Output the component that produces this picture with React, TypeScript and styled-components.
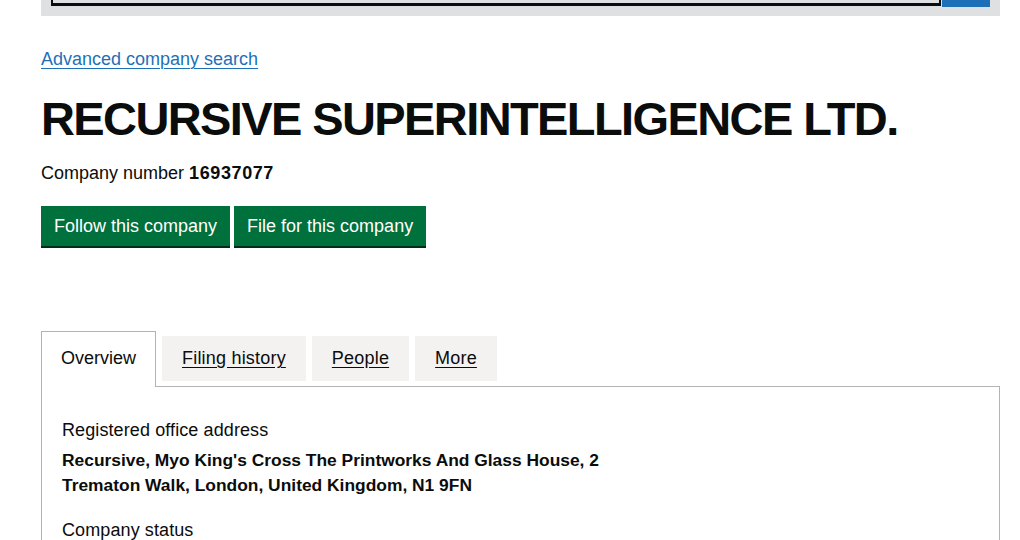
import styled, { createGlobalStyle } from "styled-components";

const GlobalStyle = createGlobalStyle`
    body {
        margin: 0;
        background: #ffffff;
        color: #0b0c0c;
        font-family: "Liberation Sans", Arial, sans-serif;
    }
`;

const Page = styled.div`
    width: 959px;
    margin-left: 41px;
`;

const SearchPanel = styled.div`
    display: flex;
    align-items: flex-start;
    height: 16px;
    padding: 0 10px;
    background-color: #dee0e2;
`;

const SearchInput = styled.div`
    flex: 1;
    height: 3px;
    border: 2px solid #0b0c0c;
    border-top: none;
    border-bottom-width: 3px;
`;

const SearchButton = styled.div`
    width: 48px;
    height: 7px;
    margin-left: 1px;
    background-color: #1d70b8;
`;

const BackLink = styled.a`
    display: inline-block;
    margin-top: 31px;
    font-size: 18px;
    line-height: 24px;
    color: #1d70b8;
    text-decoration: underline;
    text-underline-offset: 3px;
    text-decoration-thickness: 1px;
`;

const Heading = styled.h1`
    margin: 20px 0 0;
    font-size: 47px;
    line-height: 56px;
    font-weight: 700;
    letter-spacing: -1.6px;
`;

const CompanyNumber = styled.p`
    margin: 14px 0 0;
    font-size: 18px;
    line-height: 24px;

    strong {
        font-weight: 700;
        letter-spacing: 0.6px;
    }
`;

const ButtonRow = styled.div`
    display: flex;
    gap: 4px;
    margin-top: 21px;
`;

const GreenButton = styled.a`
    display: inline-block;
    padding: 8px 13px 8px;
    background-color: #00703c;
    box-shadow: 0 2px 0 #002d18;
    color: #ffffff;
    font-size: 18px;
    line-height: 24px;
    text-decoration: none;
`;

const Tabs = styled.div`
    margin-top: 85px;
`;

const TabList = styled.ul`
    display: flex;
    align-items: flex-start;
    gap: 6px;
    margin: 0;
    padding: 0;
    list-style: none;
`;

const Tab = styled.li<{ $selected?: boolean }>`
    position: relative;
    margin-top: ${(p) => (p.$selected ? "0" : "5px")};
    margin-bottom: ${(p) => (p.$selected ? "-1px" : "0")};
    padding: ${(p) => (p.$selected ? "14px 19px 16px" : "10px 20px")};
    background-color: ${(p) => (p.$selected ? "#ffffff" : "#f3f2f1")};
    border: ${(p) => (p.$selected ? "1px solid #b1b4b6" : "none")};
    border-bottom: none;
    font-size: 18px;
    line-height: 25px;

    a {
        color: #0b0c0c;
        text-decoration: ${(p) => (p.$selected ? "none" : "underline")};
        text-underline-offset: 3px;
        letter-spacing: ${(p) => (p.$selected ? "0" : "0.2px")};
    }
`;

const Panel = styled.div`
    border: 1px solid #b1b4b6;
    padding: 31px 20px 20px;
`;

const Details = styled.dl`
    margin: 0;
`;

const Label = styled.dt`
    font-size: 18px;
    line-height: 25px;
    letter-spacing: 0.1px;
`;

const Value = styled.dd`
    margin: 5px 0 20px;
    font-size: 17.4px;
    line-height: 25px;
    font-weight: 700;
    max-width: 560px;
`;

export default function App() {
    return (
        <>
            <GlobalStyle />
            <Page>
                <SearchPanel>
                    <SearchInput />
                    <SearchButton />
                </SearchPanel>
                <BackLink href="#">Advanced company search</BackLink>
                <Heading>RECURSIVE SUPERINTELLIGENCE LTD.</Heading>
                <CompanyNumber>
                    Company number <strong>16937077</strong>
                </CompanyNumber>
                <ButtonRow>
                    <GreenButton href="#">Follow this company</GreenButton>
                    <GreenButton href="#">File for this company</GreenButton>
                </ButtonRow>
                <Tabs>
                    <TabList>
                        <Tab $selected><a href="#">Overview</a></Tab>
                        <Tab><a href="#">Filing history</a></Tab>
                        <Tab><a href="#">People</a></Tab>
                        <Tab><a href="#">More</a></Tab>
                    </TabList>
                    <Panel>
                        <Details>
                            <Label>Registered office address</Label>
                            <Value>
                                Recursive, Myo King's Cross The Printworks And Glass House, 2 Trematon Walk, London, United Kingdom, N1 9FN
                            </Value>
                            <Label>Company status</Label>
                            <Value>Active</Value>
                        </Details>
                    </Panel>
                </Tabs>
            </Page>
        </>
    );
}
